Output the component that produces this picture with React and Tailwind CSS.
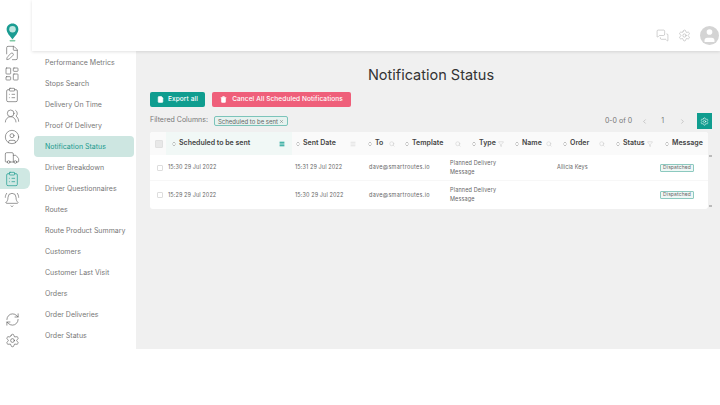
import React from 'react';
import {
    FileEdit, LayoutDashboard, ClipboardList, UsersRound, CircleUser, Truck, BellRing,
    RefreshCw, Settings, FileText, Trash2, X, ChevronLeft, ChevronRight, ChevronsUpDown,
    Search, Filter, Menu, MessagesSquare, User,
} from 'lucide-react';

const menuItems = [
    'Performance Metrics', 'Stops Search', 'Delivery On Time', 'Proof Of Delivery', 'Notification Status',
    'Driver Breakdown', 'Driver Questionnaires', 'Routes', 'Route Product Summary', 'Customers',
    'Customer Last Visit', 'Orders', 'Order Deliveries', 'Order Status',
];

const railIcons = [FileEdit, LayoutDashboard, ClipboardList, UsersRound, CircleUser, Truck, ClipboardList, BellRing];

const columns = [
    { label: 'Scheduled to be sent', width: 'w-[126px]', pad: 'pl-[5px]', gap: 'w-[106px]', icon: Menu, active: true },
    { label: 'Sent Date', width: 'w-[72px]', pad: 'pl-[3px]', gap: 'w-[53px]', icon: Menu },
    { label: 'To', width: 'w-[37px]', pad: 'pl-[3px]', gap: 'w-[20px]', icon: Search },
    { label: 'Template', width: 'w-[70px]', pad: 'pl-[3px]', gap: 'w-[49px]', icon: Search },
    { label: 'Type', width: 'w-[43px]', pad: 'pl-0', gap: 'w-[25px]', icon: Filter },
    { label: 'Name', width: 'w-[48px]', pad: 'pl-0', gap: 'w-[30px]', icon: Search },
    { label: 'Order', width: 'w-[53px]', pad: 'pl-0', gap: 'w-[35px]', icon: Search },
    { label: 'Status', width: 'w-[49px]', pad: 'pl-0', gap: 'w-[30px]', icon: Filter },
    { label: 'Message', width: 'w-[44px]', pad: 'pl-0', gap: 'w-[36px]', icon: null },
];

const rows = [
    { sched: '15:30 29 Jul 2022', sent: '15:31 29 Jul 2022', name: 'Allicia Keys' },
    { sched: '15:29 29 Jul 2022', sent: '15:30 29 Jul 2022', name: '' },
];

const Logo = () => (
    <svg width="13" height="19" viewBox="0 0 14 21">
        <path d="M7 0.5C3.2 0.5 0.5 3.4 0.5 7c0 4.2 4 8 6.5 11 2.5-3 6.5-6.800 6.500-11C13.500 3.400 10.800 0.500 7 0.500z" fill="#1a9c92" />
        <circle cx="7" cy="6.800" r="3.600" fill="#bfe6e0" />
        <ellipse cx="7" cy="19.500" rx="3.500" ry="1" fill="#7fc9a4" />
    </svg>
);

const App = () => {
    return (
        <div className="flex w-[720px] h-[405px] overflow-hidden bg-white text-[#666] font-['Inter',sans-serif]">
            {/* icon rail */}
            <div className="w-8 shrink-0 h-[349px] pt-[22px] flex flex-col">
                <div className="h-[20px] pl-[6px] flex items-center"><Logo /></div>
                <div className="w-full flex flex-col">
                    {railIcons.map((Icon, i) => (
                        <div key={i} className={`h-[21px] pl-[4px] flex items-center ${i === 6 ? 'w-[30px] bg-[#cfe8e3] rounded-r-md' : 'w-full'}`}>
                            <Icon size={16} strokeWidth={1} className={i === 6 ? 'text-[#12978b]' : 'text-[#666]'} />
                        </div>
                    ))}
                </div>
                <div className="mt-auto pl-[5px] flex flex-col gap-[6px] pb-[1px]">
                    <RefreshCw size={15} strokeWidth={1} className="text-[#555]" />
                    <Settings size={15} strokeWidth={1} className="text-[#555]" />
                </div>
            </div>

            <div className="w-[688px] flex flex-col">
                {/* header */}
                <div className="h-[51px] shrink-0 pt-[20px] pr-[1px] flex items-center justify-end shadow-[0_1px_3px_rgba(0,0,0,0.12)] relative">
                    <MessagesSquare size={13} strokeWidth={1} className="text-[#aaa] mr-[9px]" />
                    <Settings size={13} strokeWidth={1} className="text-[#aaa] mr-[9px]" />
                    <div className="w-[19px] h-[19px] rounded-full bg-[#d4d4d4] flex items-center justify-center overflow-hidden">
                        <User size={17} fill="white" strokeWidth={0} />
                    </div>
                </div>

                <div className="flex h-[298px]">
                    {/* sub menu */}
                    <div className="w-[104px] shrink-0 pt-[1px] px-[2px] flex flex-col">
                        {menuItems.map((item) => (
                            <div
                                key={item}
                                className={`h-[21px] pl-[11px] pt-[1px] flex items-center text-[7px] whitespace-nowrap rounded-[4px] ${item === 'Notification Status' ? 'bg-[#cde6e1] text-[#1b9a8e]' : 'text-[#777]'}`}
                            >
                                {item}
                            </div>
                        ))}
                    </div>

                    {/* content */}
                    <div className="flex-1 min-w-0 bg-[#f0f0f0] pl-[14px] pr-2 pt-[13px]">
                        <h1 className="text-center text-[14.500px] leading-[22px] font-normal text-[#333]">Notification Status</h1>

                        <div className="mt-[6px] flex gap-[7px]">
                            <button className="h-[15px] w-[55px] rounded-[2px] bg-[#0f9d8f] text-white text-[6.500px] tracking-[0.1px] font-medium flex items-center justify-center gap-[4px]">
                                <FileText size={7} fill="white" />
                                Export all
                            </button>
                            <button className="h-[15px] w-[139px] rounded-[2px] bg-[#ef5f7a] text-white text-[6.500px] tracking-[0.1px] font-medium flex items-center justify-center gap-[5px]">
                                <Trash2 size={7} fill="white" />
                                Cancel All Scheduled Notifications
                            </button>
                        </div>

                        <div className="h-[25px] pt-[3px] flex items-center">
                            <span className="w-[57px] mb-[2px] text-[7px] text-[#777] whitespace-nowrap">Filtered Columns:</span>
                            <span className="ml-[7px] w-[74px] h-[10px] border border-[#7cc4ba] bg-[#e6f2ef] rounded-[2px] text-[6px] text-[#666] flex items-center justify-center gap-[1px] whitespace-nowrap">
                                Scheduled to be sent
                                <X size={5} />
                            </span>
                            <div className="ml-auto flex items-center text-[7px] text-[#777]">
                                <span className="whitespace-nowrap">0-0 of 0</span>
                                <ChevronLeft size={7} className="ml-[9px] text-[#aaa]" />
                                <span className="ml-[13px]">1</span>
                                <ChevronRight size={7} className="ml-[15px] text-[#aaa]" />
                                <div className="ml-[11px] w-[15px] h-[16px] bg-[#0f9d8f] flex items-center justify-center">
                                    <Settings size={9} className="text-white" strokeWidth={1.5} />
                                </div>
                            </div>
                        </div>

                        {/* table */}
                        <div className="flex">
                            <div className="w-[560px] h-[77px] bg-white rounded-[3px] overflow-hidden">
                                <div className="h-[23px] bg-[#fafafa] flex items-center whitespace-nowrap">
                                    <div className="w-[18px] flex justify-center pl-[1px]">
                                        <div className="w-[8px] h-[8px] rounded-[1px] bg-[#e8e8e8] border border-[#e0e0e0]" />
                                    </div>
                                    {columns.map((col) => {
                                        const Icon = col.icon;
                                        return (
                                            <div key={col.label} className={`${col.width} ${col.pad} h-full shrink-0 flex items-center ${col.active ? 'bg-[#f1f8f6]' : ''}`}>
                                                <ChevronsUpDown size={6} className="text-[#888] shrink-0" />
                                                <div className={`${col.gap} ml-[2px] flex items-center`}>
                                                    <span className="text-[7px] font-semibold text-[#444]">{col.label}</span>
                                                    {Icon && <Icon size={6} className={`ml-auto ${col.active ? 'text-[#0f9d8f]' : 'text-[#bbb]'}`} strokeWidth={col.active ? 4 : 1.5} />}
                                                </div>
                                            </div>
                                        );
                                    })}
                                </div>
                                {rows.map((row, i) => (
                                    <div key={row.sched} className={`flex items-center whitespace-nowrap text-[5.500px] tracking-[0.1px] text-[#666] ${i === 0 ? 'h-[26px] border-b border-[#f7f7f7]' : 'h-[28px]'}`}>
                                        <div className="w-[18px] flex justify-center pl-[1px]">
                                            <div className="w-[6px] h-[6px] rounded-[1px] border border-[#ddd]" />
                                        </div>
                                        <div className="w-[127px]">{row.sched}</div>
                                        <div className="w-[74px]">{row.sent}</div>
                                        <div className="w-[81px] tracking-[0.3px]">dave@smartroutes.io</div>
                                        <div className="w-[107px] leading-[9px] tracking-[0.15px] whitespace-normal"><span className="block w-[52px]">Planned Delivery Message</span></div>
                                        <div className="w-[103px]">{row.name}</div>
                                        <div className="w-[34px] h-[8px] border border-[#8cc9bf] bg-[#eef7f5] text-[5px] flex items-center justify-center rounded-[1px]">Dispatched</div>
                                    </div>
                                ))}
                            </div>
                            <div className="ml-[1px] w-[3px] h-[77px] pt-[23px] pb-[2px] flex flex-col justify-between items-center">
                                <div className="w-[3px] h-[2px] bg-[#bbb]" />
                                <div className="w-[3px] h-[2px] bg-[#bbb]" />
                            </div>
                        </div>
                    </div>
                </div>
            </div>
        </div>
    );
};

export default App;
